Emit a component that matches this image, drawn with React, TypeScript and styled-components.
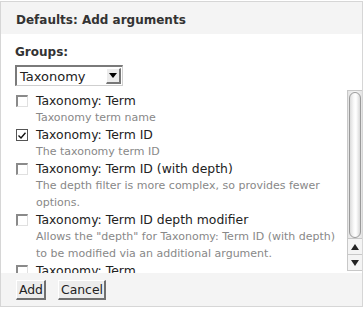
import React from 'react';
import styled, { createGlobalStyle } from 'styled-components';

const GlobalStyle = createGlobalStyle`
    html, body {
        margin: 0;
        padding: 0;
        background: #fff;
    }
    body {
        font-family: 'DejaVu Sans', Verdana, sans-serif;
        color: #333;
    }
`;

const Dialog = styled.div`
    box-sizing: border-box;
    width: 363px;
    height: 306px;
    margin-top: 1px;
    border: 1px solid #d6d6d6;
    display: flex;
    flex-direction: column;
    overflow: hidden;
`;

const Header = styled.div`
    height: 32px;
    flex-shrink: 0;
    background: #f4f4f4;
    display: flex;
    align-items: center;
    padding: 4px 0 0 15px;
    box-sizing: border-box;
    font-size: 12px;
    font-weight: bold;
    color: #333;
`;

const Body = styled.div`
    flex: 1;
    display: flex;
    flex-direction: column;
    padding-left: 14px;
    min-height: 0;
    overflow: hidden;
`;

const FieldLabel = styled.div`
    font-size: 12px;
    font-weight: bold;
    margin-top: 11px;
    line-height: 15px;
`;

const Select = styled.div`
    margin-top: 5px;
    width: 108px;
    height: 21px;
    flex-shrink: 0;
    box-sizing: border-box;
    border-style: solid;
    border-width: 2px 1px 1px 2px;
    border-color: #7a7a7a #cfcfcf #cfcfcf #7a7a7a;
    display: flex;
    align-items: center;
    justify-content: space-between;
    font-size: 13px;
    padding-left: 3px;
    color: #222;
`;

const SelectArrow = styled.div`
    width: 15px;
    height: 16px;
    margin-right: 1px;
    box-sizing: border-box;
    background: #ececec;
    border-style: solid;
    border-width: 1px 2px 2px 1px;
    border-color: #fff #777 #777 #fff;
    display: flex;
    align-items: center;
    justify-content: center;

    &::after {
        content: '';
        border-left: 4px solid transparent;
        border-right: 4px solid transparent;
        border-top: 5px solid #000;
    }
`;

const ListArea = styled.div`
    margin-top: 4px;
    flex: 1;
    min-height: 0;
    display: flex;
`;

const List = styled.div`
    flex: 1;
    overflow: hidden;
    padding-top: 2px;
`;

const Item = styled.div`
    display: flex;
    align-items: flex-start;
`;

const Check = styled.div<{ checked?: boolean }>`
    width: 12px;
    height: 12px;
    box-sizing: border-box;
    margin: 3px 8px 0 1px;
    flex-shrink: 0;
    border-style: solid;
    border-width: ${p => (p.checked ? '1px' : '2px 1px 1px 2px')};
    border-color: ${p => (p.checked ? '#555' : '#8a8a8a #e0e0e0 #e0e0e0 #8a8a8a')};
    display: flex;
    align-items: center;
    justify-content: center;
    background: #fff;
`;

const ItemText = styled.div`
    flex: 1;
`;

const ItemLabel = styled.div`
    font-size: 12.4px;
    line-height: 17px;
    color: #222;
`;

const ItemDesc = styled.div`
    font-size: 11px;
    line-height: 17px;
    color: #888;
    padding-right: 8px;
`;

const Scrollbar = styled.div`
    width: 15px;
    display: flex;
    flex-direction: column;
    box-sizing: border-box;
    border: 1px solid #c8c8c8;
    border-right: none;
    background: #f0f0f0;
    margin-bottom: 2px;
`;

const Track = styled.div`
    flex: 1;
    padding: 1px 1px 0 1px;
    display: flex;
    background: linear-gradient(to right, #e4e4e4, #f6f6f6 50%, #e4e4e4);
`;

const Thumb = styled.div`
    flex: 1;
    border: 1px solid #9a9a9a;
    border-radius: 7px;
    background: linear-gradient(to right, #dcdcdc, #fafafa 40%, #fff 60%, #d8d8d8);
`;

const ArrowBtn = styled.div<{ dir: 'up' | 'down' }>`
    height: 16px;
    border-top: 1px solid #c8c8c8;
    box-sizing: border-box;
    background: #f4f4f4;
    display: flex;
    align-items: center;
    justify-content: center;

    &::after {
        content: '';
        border-left: 4px solid transparent;
        border-right: 4px solid transparent;
        ${p => (p.dir === 'up' ? 'border-bottom: 6px solid #222;' : 'border-top: 6px solid #222;')}
    }
`;

const Footer = styled.div`
    height: 33px;
    flex-shrink: 0;
    background: #f4f4f4;
    display: flex;
    align-items: flex-start;
    gap: 12px;
    padding: 7px 0 0 15px;
    box-sizing: border-box;
`;

const Button = styled.button`
    font-family: 'DejaVu Sans', Verdana, sans-serif;
    font-size: 12.4px;
    height: 20px;
    padding: 0 1px 0 2px;
    color: #222;
    background: #ececec;
    border-style: solid;
    border-width: 1px 2px 2px 1px;
    border-color: #fff #707070 #707070 #fff;
    line-height: 16px;
    cursor: pointer;
`;

const items = [
    { label: 'Taxonomy: Term', desc: 'Taxonomy term name' },
    { label: 'Taxonomy: Term ID', desc: 'The taxonomy term ID', checked: true },
    {
        label: 'Taxonomy: Term ID (with depth)',
        desc: 'The depth filter is more complex, so provides fewer options.',
    },
    {
        label: 'Taxonomy: Term ID depth modifier',
        desc: 'Allows the "depth" for Taxonomy: Term ID (with depth) to be modified via an additional argument.',
    },
    { label: 'Taxonomy: Term' },
];

const CheckMark = () => (
    <svg width="8" height="7" viewBox="0 0 8 7">
        <path d="M0.5 3.5 L3 6 L7.5 0.8" fill="none" stroke="#111" strokeWidth="1.4" />
    </svg>
);

const App = () => (
    <>
        <GlobalStyle />
        <Dialog>
            <Header>Defaults: Add arguments</Header>
            <Body>
                <FieldLabel>Groups:</FieldLabel>
                <Select>
                    Taxonomy
                    <SelectArrow />
                </Select>
                <ListArea>
                    <List>
                        {items.map(item => (
                            <Item key={item.label}>
                                <Check checked={item.checked}>{item.checked && <CheckMark />}</Check>
                                <ItemText>
                                    <ItemLabel>{item.label}</ItemLabel>
                                    {item.desc && <ItemDesc>{item.desc}</ItemDesc>}
                                </ItemText>
                            </Item>
                        ))}
                    </List>
                    <Scrollbar>
                        <Track>
                            <Thumb />
                        </Track>
                        <ArrowBtn dir="up" />
                        <ArrowBtn dir="down" />
                    </Scrollbar>
                </ListArea>
            </Body>
            <Footer>
                <Button>Add</Button>
                <Button>Cancel</Button>
            </Footer>
        </Dialog>
    </>
);

export default App;
